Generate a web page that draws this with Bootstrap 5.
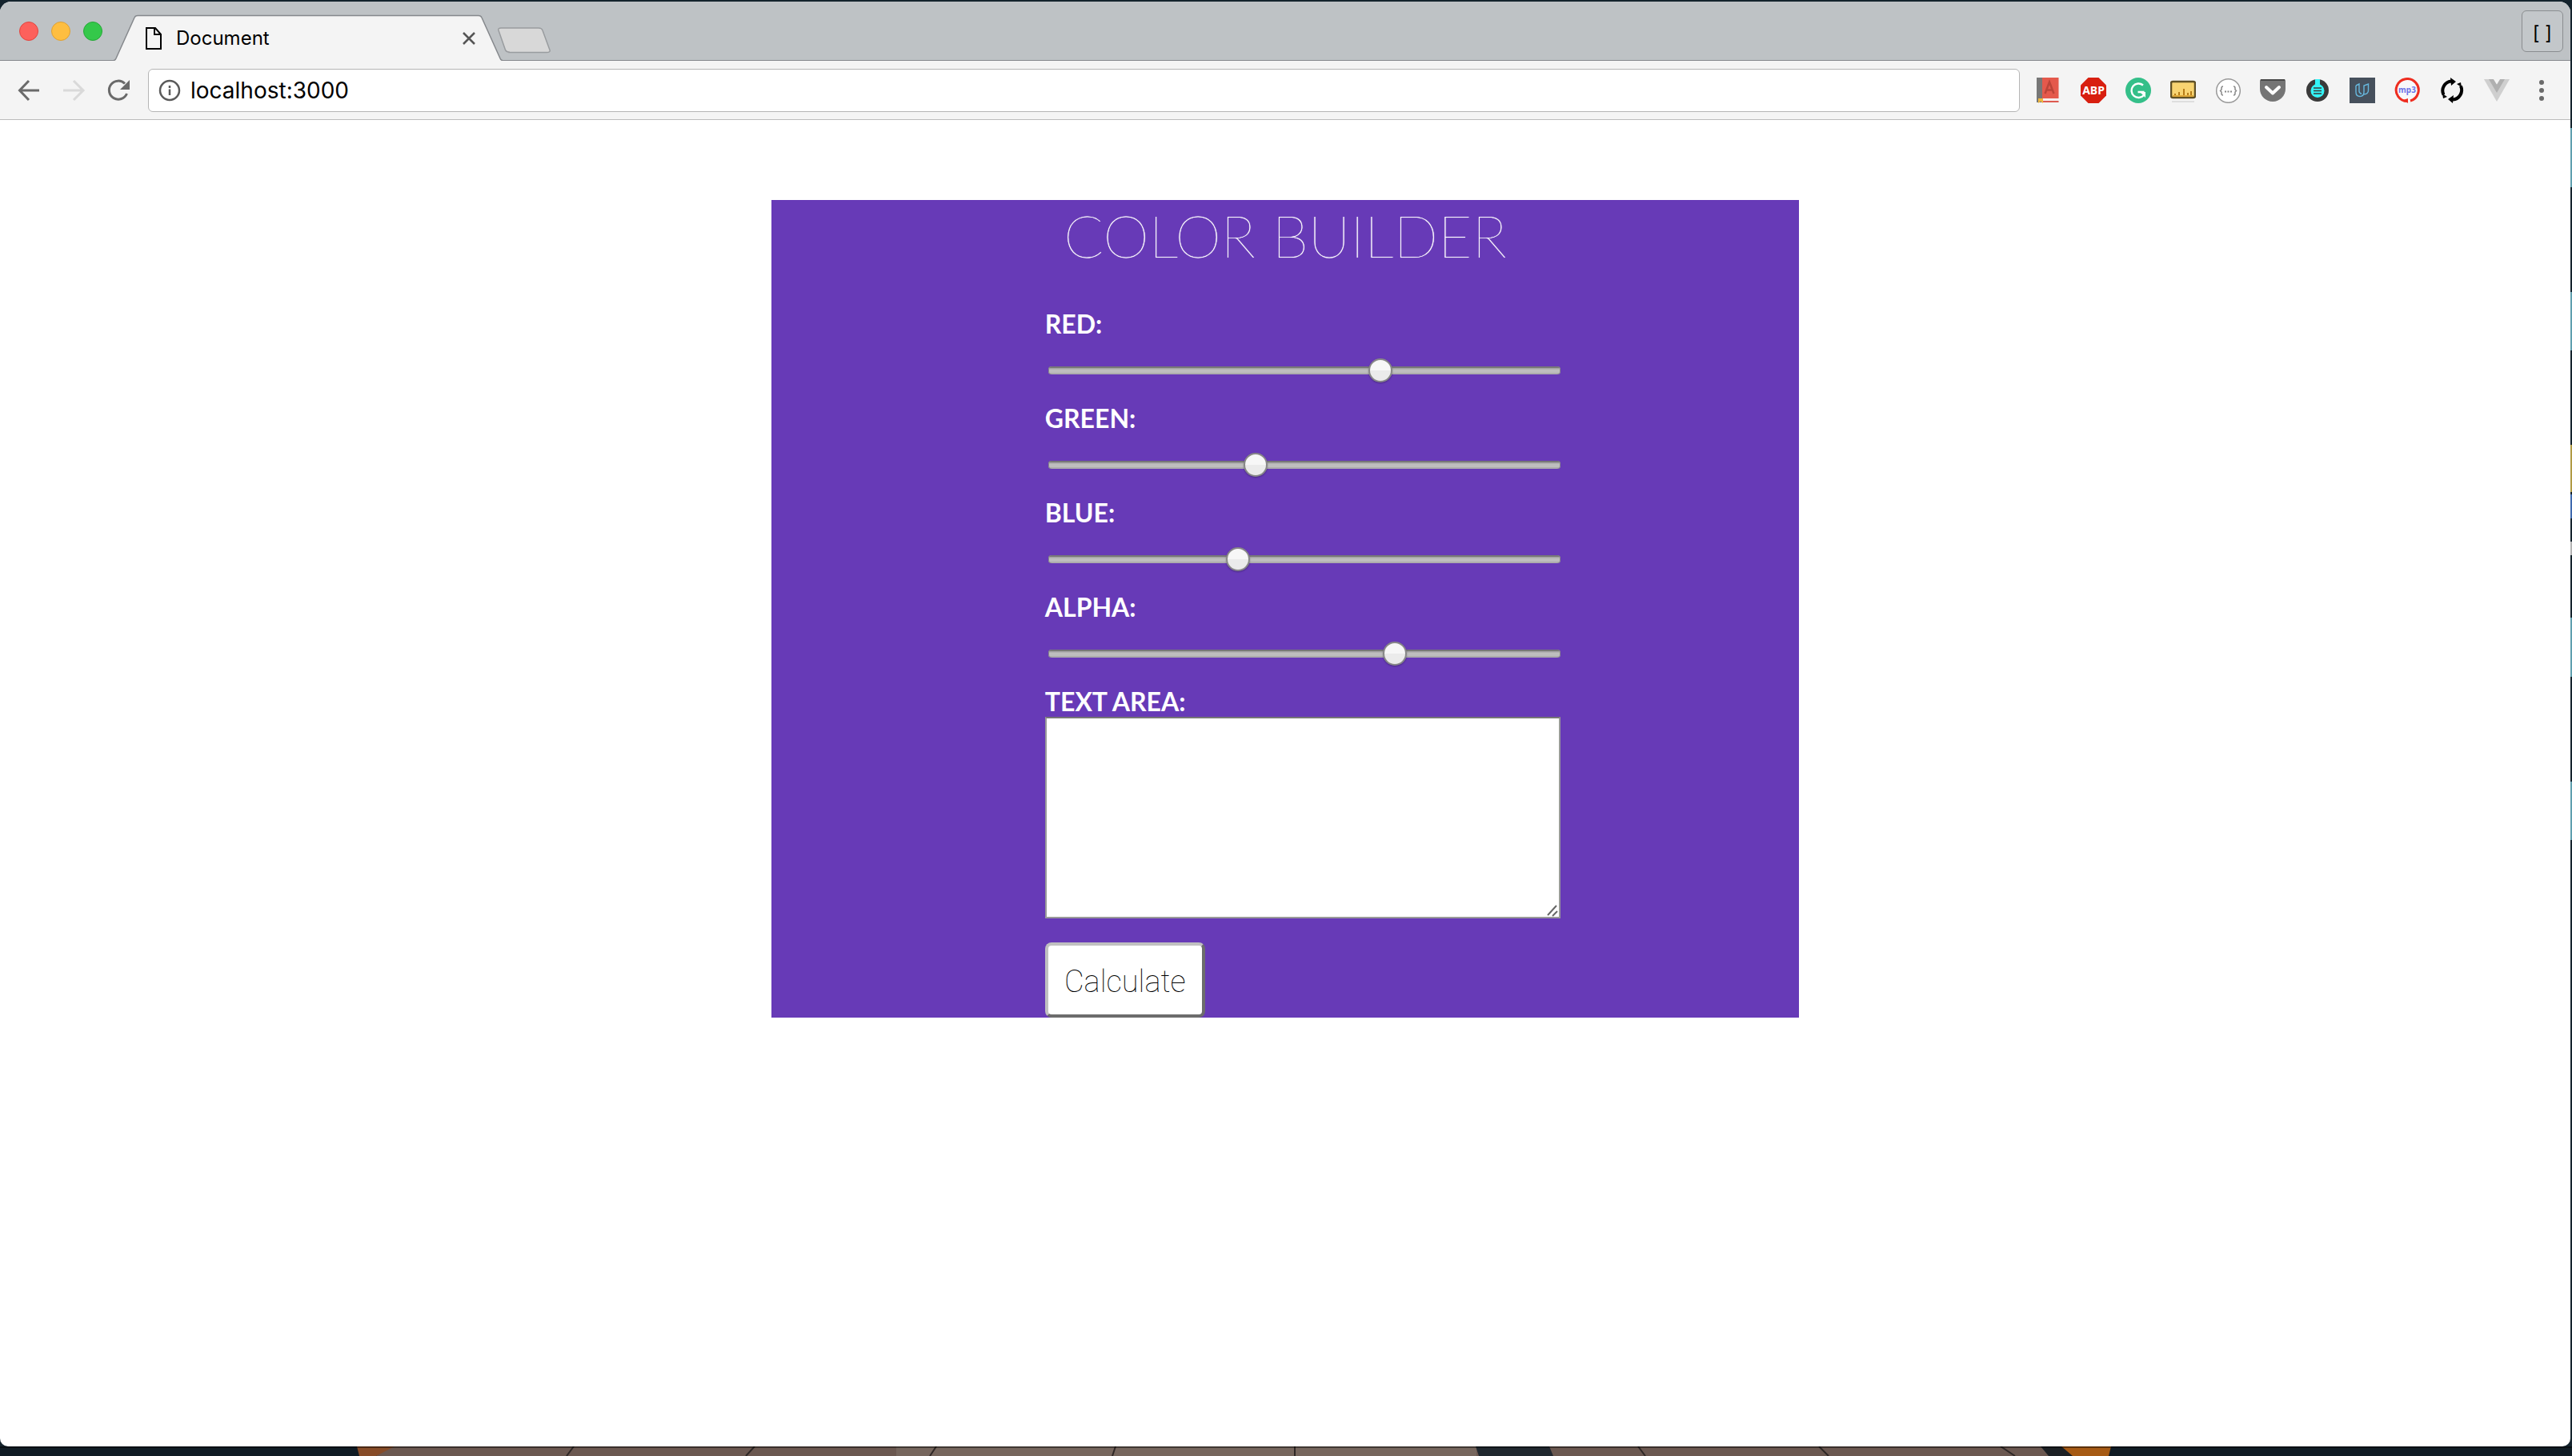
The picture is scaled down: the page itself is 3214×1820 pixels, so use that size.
<!DOCTYPE html>
<html lang="en">
<head>
<meta charset="utf-8">
<meta name="viewport" content="width=device-width, initial-scale=1">
<title>Document</title>
<link href="https://cdn.jsdelivr.net/npm/bootstrap@5.3.0/dist/css/bootstrap.min.css" rel="stylesheet">
<style>
  body {
    font-family: Inter, Roboto, "Liberation Sans", sans-serif;
    color: #000;
    /* slice of the desktop visible along the right edge */
    background: #14232d linear-gradient(#14232d 160px, #5f9fae 160px 234px, #14232d 234px 365px, #5f9fae 365px 438px, #14232d 438px 556px, #b09a45 556px 615px, #14232d 615px 618px, #3f69ad 618px 648px, #14232d 648px 677px, #b4b4b4 677px 694px, #14232d 694px 772px, #5f9fae 772px 846px, #14232d 846px 977px, #5f9fae 977px 1050px, #14232d 1050px) right top / 2px 100% no-repeat;
    padding: 2px 0 0;
  }
  .desktop { min-height: calc(100vh - 2px); }
  .browser { margin-right: 2px; border-radius: 14px 14px 10px 10px; background: #fff; overflow: hidden; }
  .tab-strip { height: 74px; background: #bec2c5; box-shadow: inset 0 -1px #85888c; padding: 0 9px 0 24px; }
  .light { width: 24px; height: 24px; border-radius: 50%; border: 1px solid; }
  .light-red { background: #fd615c; border-color: #e2453f; }
  .light-amber { background: #febe41; border-color: #dfa033; }
  .light-green { background: #34c84a; border-color: #25a836; }
  .page-tab { width: 486px; height: 74px; margin-left: 14px; padding: 18px 34px 0 40px; }
  .tab-shape { position: absolute; left: 0; top: 0; z-index: 0; }
  .page-tab > :not(.tab-shape) { position: relative; z-index: 1; }
  .tab-title { font-size: 24px; line-height: 32px; margin-left: 18px; }
  .bare { border: 0; background: none; padding: 0; display: flex; align-items: center; justify-content: center; flex: none; }
  .new-tab { margin: 22px 0 0 -6px; }
  .brackets { width: 52px; height: 52px; border: 1px solid #8a8d90; border-radius: 6px; font-size: 24px; line-height: 24px; padding-top: 6px; background: #c3c7ca; }
  .tool-strip { height: 74px; background: #f4f4f4; border-bottom: 1px solid #bcbcbc; padding: 0 20px; }
  .tool-strip .nav-btns { gap: 24px; width: 165px; flex: none; }
  .address { height: 54px; border: 1px solid #b5b5b5; border-radius: 6px; background: #fff; padding-left: 12px; }
  .address input { border: 0; outline: 0; background: none; font-size: 28px; line-height: 36px; padding: 0; margin-left: 12px; color: #000; }
  .ext { gap: 24px; margin-left: 20px; }
  .ext svg { display: block; }
  .ext text { font-family: "Noto Sans", sans-serif; font-weight: 700; }
  .builder { width: 40%; margin: 100px auto 0; background: #673ab7; color: #fff; font-family: Lato, sans-serif; }
  .builder h1 { font-size: 73px; font-weight: 100; line-height: 88px; margin: 0 0 48px; text-shadow: 0 0 1px #fff; }
  .builder form { width: calc(50% + 46px); margin: 0 auto; padding-left: 44px; }
  .field { height: 118px; }
  .builder label { display: block; font-size: 32px; font-weight: 700; line-height: 38px; }
  .track { -webkit-appearance: none; appearance: none; display: block; width: calc(100% - 4px); height: 30px; margin: 24px 0 0 4px; background: none; }
  .track::-webkit-slider-runnable-track { height: 10px; border-radius: 4px; background: linear-gradient(#777 0 2px, #a4a4a4 2px 3px, #bebebe 4px 8px, #adadad 8px); box-shadow: inset 1px 0 #888, inset -1px 0 #888; }
  .track::-webkit-slider-thumb { -webkit-appearance: none; width: 30px; height: 30px; margin-top: -10px; border-radius: 50%; border: 2px solid #878787; background: linear-gradient(#f7f7f7 50%, #ebebeb 50%); box-shadow: 0 1px 2px rgba(0,0,0,.3); }
  .result { display: block; width: 100%; height: 252px; border: 2px solid #999; border-top-color: #767676; border-radius: 0; background: #fff; padding: 4px; font-size: 26px; resize: both; outline: 0; }
  .result::-webkit-resizer { background: url("data:image/svg+xml,%3Csvg xmlns='http://www.w3.org/2000/svg' width='15' height='15'%3E%3Cpath d='M1 13L12 1M7 14L13 8' stroke='%23666' stroke-width='2' fill='none'/%3E%3C/svg%3E") no-repeat; }
  .calc { margin-top: 30px; width: 200px; height: 94px; border: 4px solid; border-color: #c0c0c0 #6c6c6c #6c6c6c #c0c0c0; border-radius: 8px; background: #fff; color: #000; font: 100 38px/48px Roboto, sans-serif; padding: 4px 0 0; display: block; }
  .floor { display: block; width: 100%; height: 12px; }
</style>
</head>
<body>
<div class="desktop d-flex flex-column">
  <div class="browser flex-grow-1 d-flex flex-column">
    <header>
      <div class="tab-strip d-flex align-items-center">
        <div class="d-flex gap-3">
          <span class="light light-red"></span><span class="light light-amber"></span><span class="light light-green"></span>
        </div>
        <div class="page-tab position-relative d-flex align-items-center">
          <svg class="tab-shape" width="486" height="74"><path d="M0 74L2 72.500L26 20Q27 17.500 30 17.500H456Q459 17.500 460 20L484 72.500L486 74Z" fill="#f4f4f4"/><path d="M0 73.500Q2 73.500 3 71L26 20Q27 17.500 30 17.500H456Q459 17.500 460 20L483 71Q484 73.500 486 73.500" fill="none" stroke="#85888c" stroke-width="1.500"/></svg>
          <svg width="20" height="28" viewBox="0 0 20 28" fill="none" stroke="#000" stroke-width="2"><path d="M1 1H12L19 9V27H1ZM11 1V9H19"/></svg>
          <span class="tab-title">Document</span>
          <button class="bare ms-auto" type="button" aria-label="Close tab"><svg width="16" height="16" stroke="#555" stroke-width="2.500"><path d="M1 1L15 15M15 1L1 15"/></svg></button>
        </div>
        <button class="bare new-tab" type="button" aria-label="New tab"><svg width="68" height="34"><path d="M14 32.500H61Q66 32.500 65 29.500L56 5Q55 2 51 2H4Q0 2 1 5L9 28Q10 32 14 32Z" fill="#d8d8d8" stroke="#999c9f" stroke-width="1.500"/></svg></button>
        <button class="bare brackets ms-auto" type="button">[ ]</button>
      </div>
      <div class="tool-strip d-flex align-items-center">
        <div class="nav-btns d-flex align-items-center">
          <button class="bare" type="button" aria-label="Back"><svg width="32" height="32" fill="none" stroke="#6a6a6a" stroke-width="3"><path d="M29 16H5M16 4L4.500 16L16 28"/></svg></button>
          <button class="bare" type="button" aria-label="Forward"><svg width="32" height="32" fill="none" stroke="#d9d9d9" stroke-width="3"><path d="M3 16H28M16 4L28 16L16 28"/></svg></button>
          <button class="bare" type="button" aria-label="Reload"><svg width="32" height="32"><path d="M26.500 20A11.500 11.500 0 1 1 24 7.500" fill="none" stroke="#6a6a6a" stroke-width="3"/><path d="M30 3V15H18Z" fill="#6a6a6a"/></svg></button>
        </div>
        <div class="address flex-grow-1 d-flex align-items-center">
          <svg width="28" height="28"><circle cx="14" cy="14" r="12" fill="none" stroke="#5a5a5a" stroke-width="2.500"/><path d="M14 12.500V20M14 8V11" stroke="#5a5a5a" stroke-width="2.500"/></svg>
          <input class="flex-grow-1" type="text" value="localhost:3000" aria-label="Address">
        </div>
        <div class="ext d-flex align-items-center">
          <button class="bare" type="button" aria-label="Dictionary"><svg width="32" height="32"><path d="M1 0H9V31H1Z" fill="#777"/><path d="M8 0H28.500V26H8Z" fill="#e4594c"/><path d="M8 26H28V29H8Z" fill="#f6eeee"/><path d="M8 29H28.500V31H8Z" fill="#dd5a50"/><path d="M3 26H9V32L6 29.500L3 32Z" fill="#f1b83c"/><path d="M11.500 20L17 5.500L22.500 20M13.500 15.500H20.500" fill="none" stroke="#bb4439" stroke-width="2.500"/></svg></button>
          <button class="bare" type="button" aria-label="Ad blocker"><svg width="32" height="32"><path d="M9.500 0H22.500L32 9.500V22.500L22.500 32H9.500L0 22.500V9.500Z" fill="#d81f10"/><text x="16" y="21" font-size="14" fill="#fff" text-anchor="middle">ABP</text></svg></button>
          <button class="bare" type="button" aria-label="Grammar"><svg width="32" height="32"><circle cx="16" cy="16" r="16" fill="#34bf89"/><path d="M22 9.500A8.800 8.800 0 1 0 23 22M15.500 18H23.500" fill="none" stroke="#fff" stroke-width="2.400"/><path d="M18 18H25V25Z" fill="#fff"/></svg></button>
          <button class="bare" type="button" aria-label="Ruler"><svg width="32" height="32"><path d="M2 30H30" stroke="#dedede" stroke-width="2"/><rect x="1" y="5" width="30" height="20" rx="2" fill="#f8d471" stroke="#605126" stroke-width="2.500"/><path d="M6 24V20M11 24V18M17 24V14M22 24V19M26 24V17" stroke="#b57b17" stroke-width="2"/><path d="M3 23H29" stroke="#dea838" stroke-width="2"/></svg></button>
          <button class="bare" type="button" aria-label="JSON"><svg width="32" height="32" fill="none" stroke="#888"><circle cx="16.500" cy="16.500" r="14.800" fill="#fff" stroke="#999" stroke-width="1.500"/><path d="M10 11Q8 11 8 13V15L6.500 16.500L8 18V20Q8 22 10 22M23 11Q25 11 25 13V15L26.500 16.500L25 18V20Q25 22 23 22" stroke-width="1.500"/><path d="M12 17.500H21" stroke-width="2" stroke-dasharray="2 1.500"/></svg></button>
          <button class="bare" type="button" aria-label="Pocket"><svg width="32" height="32"><path d="M2 2H30Q32 2 32 4V14A16 16 0 0 1 0 14V4Q0 2 2 2Z" fill="#757575"/><path d="M1 3H31" stroke="#484848" stroke-width="2"/><path d="M8 12L16 19.500L24 12" fill="none" stroke="#fff" stroke-width="4" stroke-linecap="round" stroke-linejoin="round"/></svg></button>
          <button class="bare" type="button" aria-label="Flask"><svg width="32" height="32"><circle cx="16" cy="16" r="14" fill="#3a3a3a"/><circle cx="16" cy="16.500" r="8.500" fill="#34f4f7"/><path d="M13 2H19V11H13Z" fill="#34f4f7"/><path d="M11 13H21M11 16.500H21M11 20H21" stroke="#3a3a3a" stroke-width="1.500"/></svg></button>
          <button class="bare" type="button" aria-label="Courses"><svg width="32" height="32"><path d="M0 0H32V32H0Z" fill="#46505c"/><path d="M8 10L12 8V17Q12 19 15 20.500M8 10V18Q8 23.500 13 23.500Q18 23.500 18 18V10L23.500 8V16Q23.500 21 17 21" fill="none" stroke="#67b8de" stroke-width="1.400"/></svg></button>
          <button class="bare" type="button" aria-label="mp3"><svg width="32" height="32"><path d="M17 29.500A14 14 0 1 1 20 29" fill="#f8f8fa" stroke="#ee2d20" stroke-width="3"/><path d="M11 28L17 32V26Z" fill="#ee2d20"/><text x="16" y="19" font-size="10" fill="#6b74e8" text-anchor="middle">mp3</text></svg></button>
          <button class="bare" type="button" aria-label="Sync"><svg width="32" height="32"><path d="M5.500 21.500A12 12 0 0 1 15 4.500M27 10.500A12 12 0 0 1 17 27.500" fill="none" stroke="#000" stroke-width="4"/><path d="M14 0L21 5L15 10ZM18 22L11 27L17 32Z"/><path d="M22 8L27 6L28 12ZM10 24L5 26L4 20Z"/></svg></button>
          <button class="bare" type="button" aria-label="Vue"><svg width="32" height="32"><path d="M0 2H32L16 30Z" fill="#cfcfcf"/><path d="M6 2H12L16 8.500L20 2H26L16 19Z" fill="#b0b0b0"/><path d="M12 2H20L16 8.500Z" fill="#f4f4f4"/></svg></button>
          <button class="bare" type="button" aria-label="Menu"><svg width="32" height="32" fill="#6a6a6a"><circle cx="16" cy="6" r="3"/><circle cx="16" cy="16" r="3"/><circle cx="16" cy="26" r="3"/></svg></button>
        </div>
      </div>
    </header>
    <main>
      <section class="builder">
        <h1 class="text-center">COLOR BUILDER</h1>
        <form>
          <div class="field"><label for="red">RED:</label><input class="track" id="red" type="range" min="0" max="255" value="167"></div>
          <div class="field"><label for="green">GREEN:</label><input class="track" id="green" type="range" min="0" max="255" value="102"></div>
          <div class="field"><label for="blue">BLUE:</label><input class="track" id="blue" type="range" min="0" max="255" value="93"></div>
          <div class="field"><label for="alpha">ALPHA:</label><input class="track" id="alpha" type="range" min="0" max="1" step="0.005" value="0.685"></div>
          <label for="result">TEXT AREA:</label>
          <textarea class="result" id="result"></textarea>
          <button class="calc" type="button">Calculate</button>
        </form>
      </section>
    </main>
  </div>
  <svg class="floor" viewBox="0 0 3214 12" preserveAspectRatio="none">
    <path d="M0 0H3214V12H0Z" fill="#101c25"/>
    <path d="M485 0H2565L2590 12H470Z" fill="#6b5850"/>
    <path d="M1120 0H1845V12H1120Z" fill="#76665d"/>
    <path d="M446 0H493L470 12H449Z" fill="#874c28"/>
    <path d="M1844 0H1936L1941 12H1848Z" fill="#20282f"/>
    <path d="M2550 0H2576L2590 12H2560Z" fill="#1c2024"/>
    <path d="M2576 0H2638L2635 12H2590Z" fill="#a65a14"/>
    <path d="M717 0L708 12M943 0L932 12M1170 0L1162 12M1394 0L1390 12M1618 0V12M2047 0L2056 12M2273 0L2285 12M2500 0L2518 12" stroke="#2f2826" stroke-width="2"/>
    <path d="M0 0H3214V2H0Z" fill="#000" opacity=".45"/>
  </svg>
</div>
<script src="https://cdn.jsdelivr.net/npm/bootstrap@5.3.0/dist/js/bootstrap.bundle.min.js"></script>
</body>
</html>
